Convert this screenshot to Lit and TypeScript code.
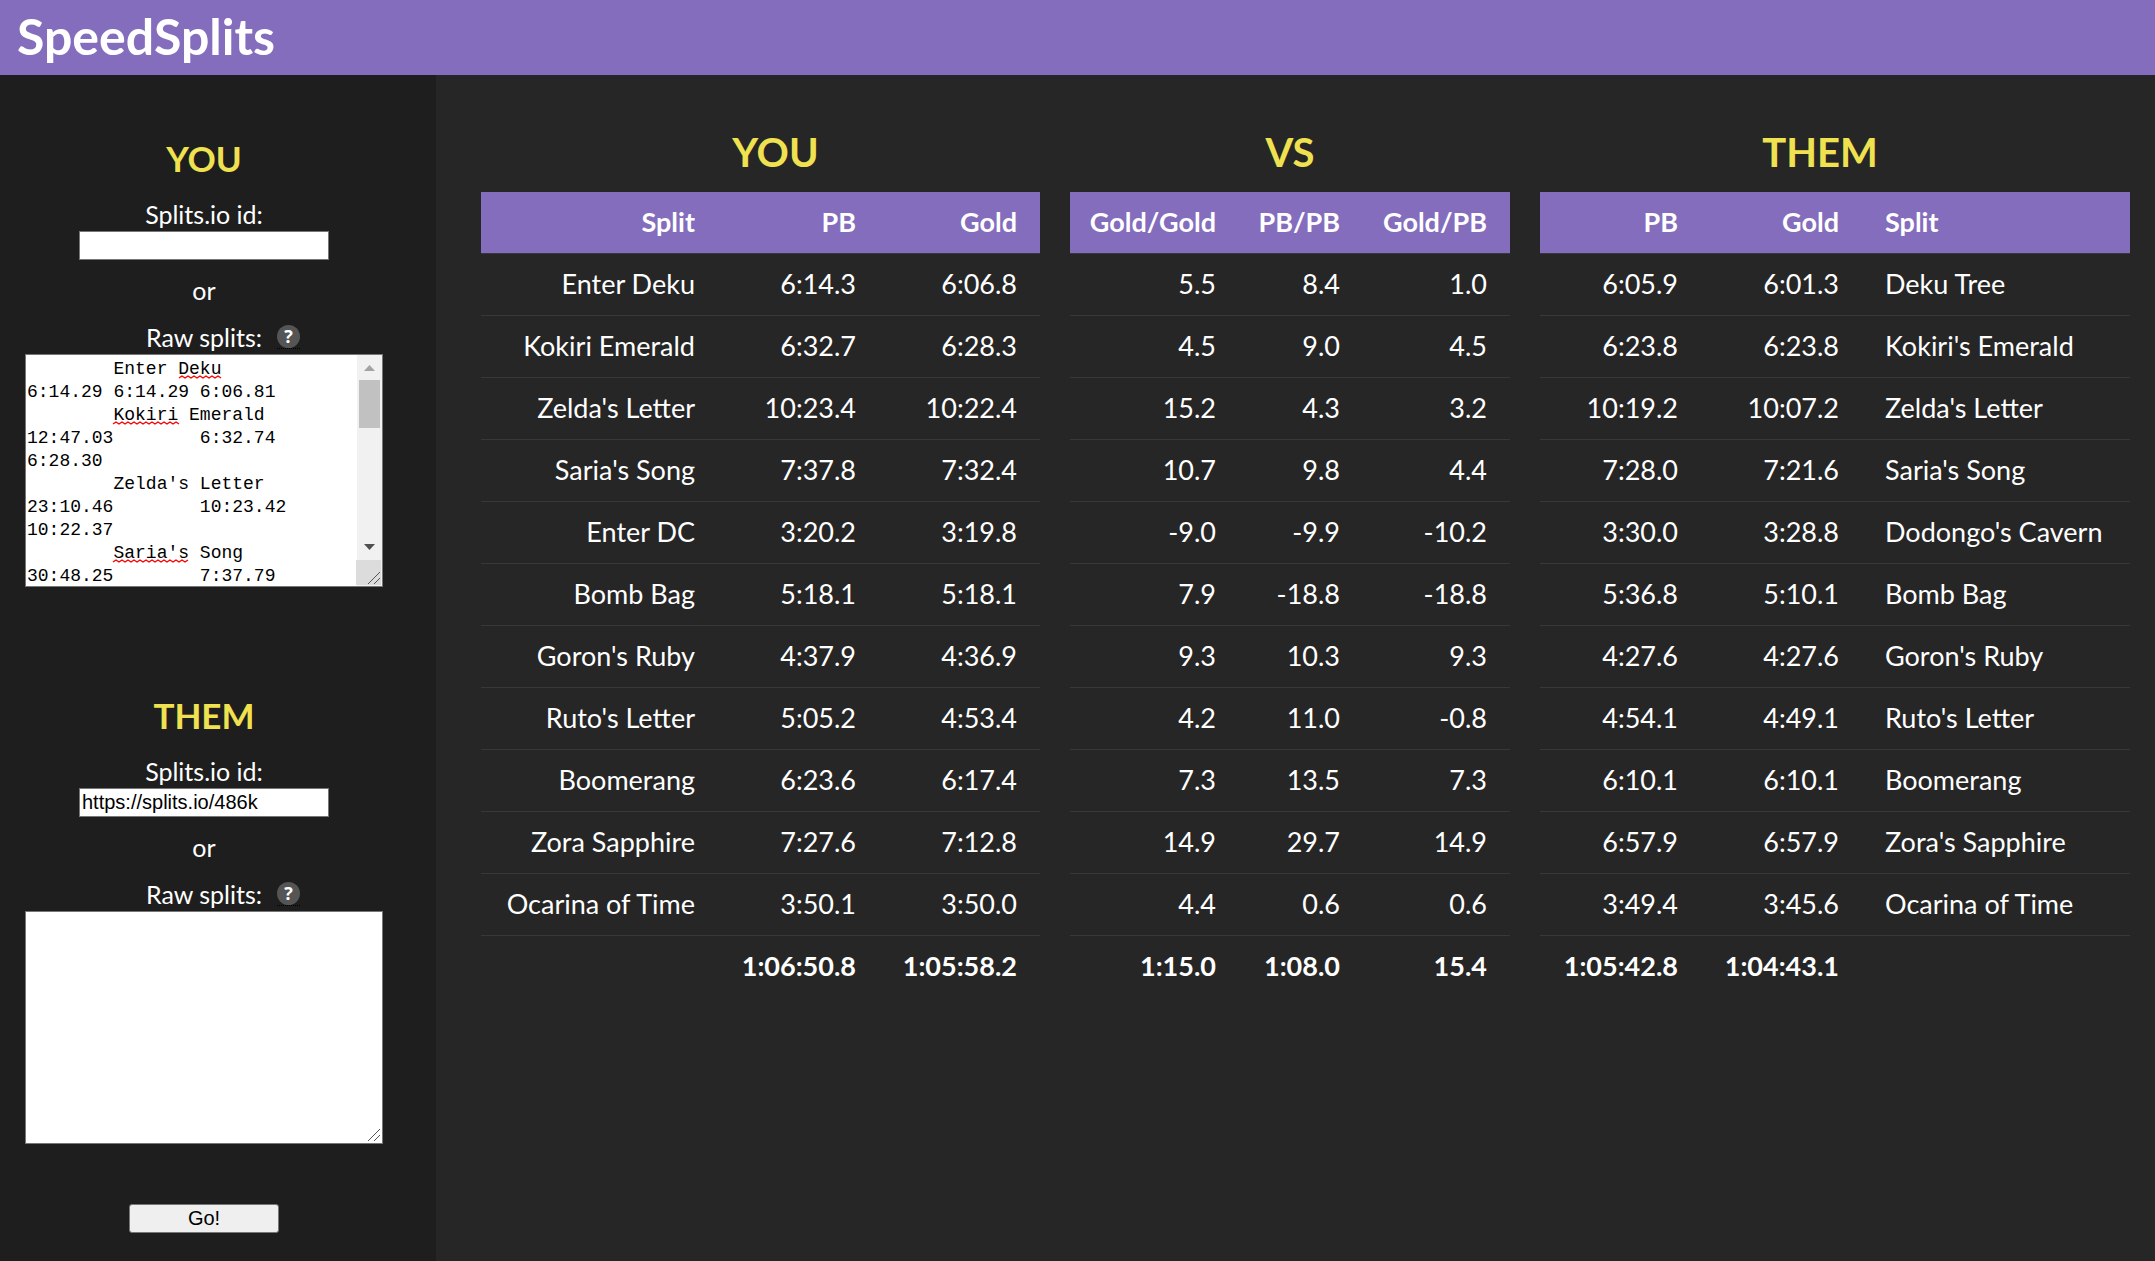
import { LitElement, html, css, svg, nothing } from "lit";
import { customElement, property } from "lit/decorators.js";

type Align = "right" | "left";

interface Column {
  label: string;
  share: number;
  align?: Align;
}

interface Board {
  title: string;
  columns: Column[];
  rows: string[][];
  totals: string[];
}

const YOU: Board = {
  title: "YOU",
  columns: [
    { label: "Split", share: 237 },
    { label: "PB", share: 161 },
    { label: "Gold", share: 161 },
  ],
  rows: [
    ["Enter Deku", "6:14.3", "6:06.8"],
    ["Kokiri Emerald", "6:32.7", "6:28.3"],
    ["Zelda's Letter", "10:23.4", "10:22.4"],
    ["Saria's Song", "7:37.8", "7:32.4"],
    ["Enter DC", "3:20.2", "3:19.8"],
    ["Bomb Bag", "5:18.1", "5:18.1"],
    ["Goron's Ruby", "4:37.9", "4:36.9"],
    ["Ruto's Letter", "5:05.2", "4:53.4"],
    ["Boomerang", "6:23.6", "6:17.4"],
    ["Zora Sapphire", "7:27.6", "7:12.8"],
    ["Ocarina of Time", "3:50.1", "3:50.0"],
  ],
  totals: ["", "1:06:50.8", "1:05:58.2"],
};

const VS: Board = {
  title: "VS",
  columns: [
    { label: "Gold/Gold", share: 169 },
    { label: "PB/PB", share: 124 },
    { label: "Gold/PB", share: 147 },
  ],
  rows: [
    ["5.5", "8.4", "1.0"],
    ["4.5", "9.0", "4.5"],
    ["15.2", "4.3", "3.2"],
    ["10.7", "9.8", "4.4"],
    ["-9.0", "-9.9", "-10.2"],
    ["7.9", "-18.8", "-18.8"],
    ["9.3", "10.3", "9.3"],
    ["4.2", "11.0", "-0.8"],
    ["7.3", "13.5", "7.3"],
    ["14.9", "29.7", "14.9"],
    ["4.4", "0.6", "0.6"],
  ],
  totals: ["1:15.0", "1:08.0", "15.4"],
};

const THEM: Board = {
  title: "THEM",
  columns: [
    { label: "PB", share: 161 },
    { label: "Gold", share: 161 },
    { label: "Split", share: 268, align: "left" },
  ],
  rows: [
    ["6:05.9", "6:01.3", "Deku Tree"],
    ["6:23.8", "6:23.8", "Kokiri's Emerald"],
    ["10:19.2", "10:07.2", "Zelda's Letter"],
    ["7:28.0", "7:21.6", "Saria's Song"],
    ["3:30.0", "3:28.8", "Dodongo's Cavern"],
    ["5:36.8", "5:10.1", "Bomb Bag"],
    ["4:27.6", "4:27.6", "Goron's Ruby"],
    ["4:54.1", "4:49.1", "Ruto's Letter"],
    ["6:10.1", "6:10.1", "Boomerang"],
    ["6:57.9", "6:57.9", "Zora's Sapphire"],
    ["3:49.4", "3:45.6", "Ocarina of Time"],
  ],
  totals: ["1:05:42.8", "1:04:43.1", ""],
};

const RAW_SPLITS = [
  "\tEnter Deku",
  "6:14.29\t6:14.29\t6:06.81",
  "\tKokiri Emerald",
  "12:47.03\t6:32.74",
  "6:28.30",
  "\tZelda's Letter",
  "23:10.46\t10:23.42",
  "10:22.37",
  "\tSaria's Song",
  "30:48.25\t7:37.79",
].join("\n");

@customElement("split-table")
class SplitTable extends LitElement {
  @property({ attribute: false }) board!: Board;
  /* Which neighbouring gutter the title is centred across as well. */
  @property() gutter: "" | "before" | "after" = "";

  static styles = css`
    :host {
      display: block;
      min-width: 0;
    }
    .title {
      margin: 0 0 10px;
      color: #efe150;
      font-size: 40px;
      line-height: 60px;
      font-weight: 700;
      text-align: center;
    }
    .before {
      margin-left: -30px;
    }
    .after {
      margin-right: -30px;
    }
    .table {
      width: 100%;
      table-layout: fixed;
      border-collapse: separate;
      border-spacing: 0;
      font-size: 27px;
      line-height: 37px;
    }
    .cell {
      padding: 11px 23px 13px 0;
      border-bottom: 1px solid #383838;
      text-align: right;
      white-space: nowrap;
      font-weight: 400;
    }
    .left {
      padding-left: 23px;
      padding-right: 0;
      text-align: left;
    }
    .head {
      background: #846dbd;
      background-clip: padding-box;
      font-weight: 700;
    }
    .total {
      border-bottom: 0;
      font-weight: 700;
    }
  `;

  private side(i: number) {
    return this.board.columns[i].align === "left" ? "left" : "";
  }

  render() {
    const { title, columns, rows, totals } = this.board;
    const sum = columns.reduce((n, c) => n + c.share, 0);
    return html`
      <h2 class="title ${this.gutter}" id="title">${title}</h2>
      <table class="table" aria-labelledby="title">
        <colgroup>
          ${columns.map((c) => html`<col style="width:${(c.share / sum) * 100}%" />`)}
        </colgroup>
        <thead>
          <tr>
            ${columns.map((c, i) => html`<th scope="col" class="cell head ${this.side(i)}">${c.label}</th>`)}
          </tr>
        </thead>
        <tbody>
          ${rows.map(
            (r) => html`<tr>${r.map((v, i) => html`<td class="cell ${this.side(i)}">${v}</td>`)}</tr>`
          )}
        </tbody>
        <tfoot>
          <tr>${totals.map((v, i) => html`<td class="cell total ${this.side(i)}">${v}</td>`)}</tr>
        </tfoot>
      </table>
    `;
  }
}

/* A zigzag spelling mark that runs from x to x + width. */
const squiggle = (x: number, y: number, width: number) => {
  let d = `M${x} ${y + 2}`;
  for (let i = 3, up = true; i <= width; i += 3, up = !up) d += `L${x + i} ${up ? y : y + 2}`;
  return svg`<path d=${d} fill="none" stroke="#f00" stroke-width="1.4" />`;
};

@customElement("split-source")
class SplitSource extends LitElement {
  @property() heading = "";
  @property() link = "";
  @property() raw = "";

  static styles = css`
    :host {
      display: flex;
      flex-direction: column;
      align-items: center;
      font-size: 25px;
      line-height: 32px;
    }
    .heading {
      margin: 0 0 15px;
      color: #efe150;
      font-size: 35px;
      line-height: 50px;
      font-weight: 700;
    }
    .label {
      margin-bottom: 1px;
    }
    .link {
      box-sizing: border-box;
      width: 250px;
      height: 29px;
      margin: 0;
      padding: 1px 2px;
      border: 1px solid #767676;
      border-radius: 0;
      background: #fff;
      color: #000;
      font: 20px "Liberation Sans", Arial, sans-serif;
    }
    .or {
      margin: 14px 0 15px;
    }
    .rawline {
      display: grid;
      grid-template-columns: 1fr auto 1fr;
      align-items: center;
      width: 100%;
      margin-bottom: 1px;
    }
    .rawlabel {
      grid-column: 2;
    }
    .help {
      justify-self: start;
      margin-left: 15px;
      border-bottom: 1px dotted #000;
      text-decoration: none;
      cursor: help;
    }
    .dot {
      display: block;
      width: 23px;
      height: 23px;
      border-radius: 50%;
      background: #555;
      font-family: "Open Sans", sans-serif;
      font-size: 18px;
      line-height: 23px;
      font-weight: 700;
      text-align: center;
    }
    .box {
      position: relative;
      width: 358px;
      height: 233px;
    }
    .raw {
      display: block;
      box-sizing: border-box;
      width: 100%;
      height: 100%;
      margin: 0;
      padding: 3px 1px;
      border: 1px solid #767676;
      border-radius: 0;
      background: #fff;
      color: #000;
      font: 18px/23px "Liberation Mono", monospace;
      resize: none;
      overflow-y: scroll;
      scrollbar-width: none;
    }
    .overlay {
      position: absolute;
      inset: 0;
      pointer-events: none;
    }
  `;

  render() {
    return html`
      <h2 class="heading">${this.heading}</h2>
      <label class="label" for="link">Splits.io id:</label>
      <input class="link" id="link" type="text" .value=${this.link} />
      <div class="or">or</div>
      <div class="rawline">
        <label class="rawlabel" for="raw">Raw splits:</label>
        <abbr class="help"><span class="dot">?</span></abbr>
      </div>
      <div class="box">
        <textarea class="raw" id="raw" spellcheck="false" .value=${this.raw}></textarea>
        <svg class="overlay" width="358" height="233" viewBox="0 0 358 233" aria-hidden="true">
          ${this.raw
            ? svg`
              <rect x="332" y="1" width="25" height="231" fill="#f1f1f1" />
              <rect x="334" y="26" width="21" height="48" fill="#c1c1c1" />
              <path d="M339 17L344.500 11L350 17Z" fill="#a3a3a3" />
              <path d="M339 190L350 190L344.500 196Z" fill="#505050" />
              <rect x="331" y="206" width="25" height="25" fill="#dcdcdc" />
              ${squiggle(154, 22, 43)}
              ${squiggle(88, 68, 66)}
              ${squiggle(88, 206, 77)}`
            : nothing}
          <path d="M343 230L355 218M349 230L355 224" stroke="#555" stroke-width="1" fill="none" />
        </svg>
      </div>
    `;
  }
}

@customElement("app-root")
class AppRoot extends LitElement {
  static styles = css`
    :host {
      display: flex;
      flex-direction: column;
      min-height: 100vh;
      background: #262626;
      color: #fff;
      font-family: Lato, "Open Sans", sans-serif;
    }
    .bar {
      padding: 0 17px 2px;
      background: #846dbd;
    }
    .brand {
      margin: 0;
      font-size: 50px;
      line-height: 73px;
      font-weight: 700;
    }
    .page {
      display: flex;
      flex: 1;
    }
    .sidebar {
      display: flex;
      flex-direction: column;
      align-items: center;
      flex: none;
      box-sizing: border-box;
      width: 436px;
      padding: 58px 28px 28px 0;
      background: #1e1e1e;
    }
    .them {
      margin-top: 103px;
    }
    .go {
      width: 150px;
      height: 29px;
      margin: 60px 0 0;
      padding: 0;
      border: 1px solid #767676;
      border-radius: 3px;
      background: #efefef;
      color: #000;
      font: 20px "Liberation Sans", Arial, sans-serif;
    }
    .results {
      display: grid;
      flex: 1;
      grid-template-columns: 559fr 440fr 590fr;
      align-items: start;
      gap: 30px;
      padding: 47px 25px 40px 45px;
    }
  `;

  render() {
    return html`
      <header class="bar"><h1 class="brand">SpeedSplits</h1></header>
      <div class="page">
        <form class="sidebar" @submit=${(e: Event) => e.preventDefault()}>
          <split-source heading="YOU" .raw=${RAW_SPLITS}></split-source>
          <split-source class="them" heading="THEM" link="https://splits.io/486k"></split-source>
          <button class="go" type="submit">Go!</button>
        </form>
        <main class="results">
          <split-table .board=${YOU} gutter="after"></split-table>
          <split-table .board=${VS}></split-table>
          <split-table .board=${THEM} gutter="before"></split-table>
        </main>
      </div>
    `;
  }
}
